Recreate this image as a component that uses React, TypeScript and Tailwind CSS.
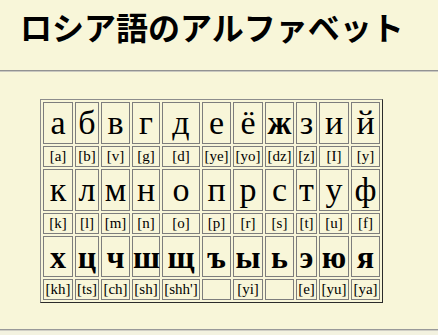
import React from "react";

const widthCls = [
  "w-[30px]",
  "w-[24px]",
  "w-[29px]",
  "w-[28px]",
  "w-[38px]",
  "w-[29px]",
  "w-[30px]",
  "w-[29px]",
  "w-[21px]",
  "w-[30px]",
  "w-[29px]",
];

const rows: { cells: string[]; big: boolean; h: string; bold?: boolean }[] = [
  { cells: ["а", "б", "в", "г", "д", "е", "ё", "ж", "з", "и", "й"], big: true, h: "h-[42px]" },
  { cells: ["[a]", "[b]", "[v]", "[g]", "[d]", "[ye]", "[yo]", "[dz]", "[z]", "[I]", "[y]"], big: false, h: "h-[21px]" },
  { cells: ["к", "л", "м", "н", "о", "п", "р", "с", "т", "у", "ф"], big: true, h: "h-[42px]" },
  { cells: ["[k]", "[l]", "[m]", "[n]", "[o]", "[p]", "[r]", "[s]", "[t]", "[u]", "[f]"], big: false, h: "h-[21px]" },
  { cells: ["х", "ц", "ч", "ш", "щ", "ъ", "ы", "ь", "э", "ю", "я"], big: true, h: "h-[41px]", bold: true },
  { cells: ["[kh]", "[ts]", "[ch]", "[sh]", "[shh']", "", "[yi]", "", "[e]", "[yu]", "[ya]"], big: false, h: "h-[21px]" },
];

function cellClass(ri: number, ci: number, r: (typeof rows)[number]) {
  let cls = (ri === 0 ? widthCls[ci] + " " : "") + r.h + " p-0 text-center align-middle border border-[#7d7d7d] ";
  if (!r.big) return cls + "text-[15px] leading-none";
  if (r.bold) return cls + "text-[32px] leading-none font-bold";
  if (ri === 0 && ci === 7) return cls + "text-[33px] leading-none font-bold";
  return cls + "text-[34px] leading-none font-normal";
}

export default function App() {
  return (
    <div className="min-h-[335px] w-[438px] bg-[#f8f6d9] text-black font-['Liberation_Serif','Noto_Sans_CJK_JP',serif]">
      <div className="h-[70px] pt-[9px] pl-[20px]">
        <h1 className="text-[32px] leading-[40px] font-bold font-['Liberation_Serif','Noto_Sans_CJK_JP',serif]">
          ロシア語のアルファベット
        </h1>
      </div>
      <div className="h-0 border-t border-b border-t-[#939393] border-b-[#c9c8c0]" />
      <div className="pt-[27px] pl-[40px]">
        <table className="table-fixed w-[343px] border-separate border-spacing-[2px] border border-t-[#8c8c8c] border-l-[#8c8c8c] border-r-[#2b2b2b] border-b-[#2b2b2b]">
          <tbody>
            {rows.map((r, ri) => (
              <tr key={ri}>
                {r.cells.map((c, ci) => (
                  <td key={ci} className={cellClass(ri, ci, r)}>
                    {c}
                  </td>
                ))}
              </tr>
            ))}
          </tbody>
        </table>
      </div>
      <div className="mt-[26px] h-0 border-t border-b border-t-[#999999] border-b-[#d0cfc6]" />
      <div className="h-[4px] bg-[#f3f2e0]" />
    </div>
  );
}
